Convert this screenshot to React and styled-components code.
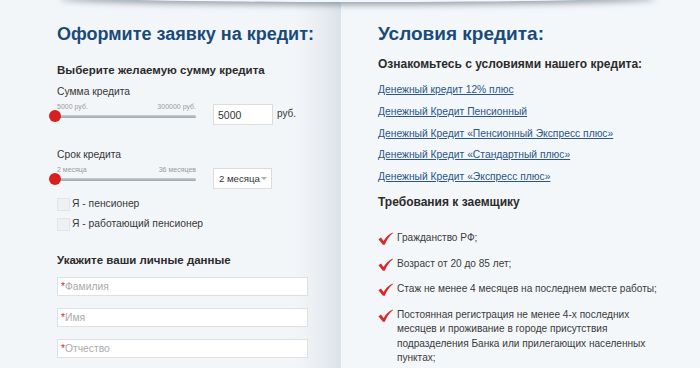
import React from "react";
import styled, { createGlobalStyle } from "styled-components";

const GlobalStyle = createGlobalStyle`
  html, body {
    margin: 0;
    padding: 0;
    background: #f4f7fa;
    font-family: "Liberation Sans", Arial, sans-serif;
  }
`;

const links = [
  "Денежный кредит 12% плюс",
  "Денежный Кредит Пенсионный",
  "Денежный Кредит «Пенсионный Экспресс плюс»",
  "Денежный Кредит «Стандартный плюс»",
  "Денежный Кредит «Экспресс плюс»",
];

const requirements = [
  "Гражданство РФ;",
  "Возраст от 20 до 85 лет;",
  "Стаж не менее 4 месяцев на последнем месте работы;",
  "Постоянная регистрация не менее 4-х последних месяцев и проживание в городе присутствия подразделения Банка или прилегающих населенных пунктах;",
];

const Check = () => (
  <svg width="15" height="13" viewBox="0 0 15 13">
    <path
      d="M0.4 7.2 L3 5.6 L5.6 9 C7.6 5.4 10.2 2.4 14.6 0.4 L14.9 1.3 C11.2 4.2 8.8 8 6.8 12.8 L4.9 12.8 Z"
      fill="#d52b2b"
    />
  </svg>
);

const App = () => {
  return (
    <>
      <GlobalStyle />
      <Page>
        <LeftPanel>
          <Title $size={18}>Оформите заявку на кредит:</Title>
          <SubTitle>Выберите желаемую сумму кредита</SubTitle>
          <Label>Сумма кредита</Label>
          <SliderRow>
            <Slider>
              <Scale>
                <span>5000 руб.</span>
                <span>300000 руб.</span>
              </Scale>
              <Track>
                <Knob />
              </Track>
            </Slider>
            <Field>5000</Field>
            <Unit>руб.</Unit>
          </SliderRow>

          <Label $gap={23}>Срок кредита</Label>
          <SliderRow>
            <Slider $bottom={8}>
              <Scale>
                <span>2 месяца</span>
                <span>36 месяцев</span>
              </Scale>
              <Track>
                <Knob />
              </Track>
            </Slider>
            <Select>
              2 месяца<Caret />
            </Select>
          </SliderRow>

          <CheckList>
            <CheckRow>
              <Box />Я - пенсионер
            </CheckRow>
            <CheckRow>
              <Box />Я - работающий пенсионер
            </CheckRow>
          </CheckList>

          <SubTitle $gap={21}>Укажите ваши личные данные</SubTitle>
          <Inputs>
            {["Фамилия", "Имя", "Отчество"].map((p) => (
              <TextInput key={p}>
                <Star>*</Star>
                {p}
              </TextInput>
            ))}
          </Inputs>
        </LeftPanel>

        <RightPanel>
          <Title $size={19}>Условия кредита:</Title>
          <SubTitle $gap={10} $size={12}>
            Ознакомьтесь с условиями нашего кредита:
          </SubTitle>
          <LinkList>
            {links.map((l) => (
              <Link key={l} href="#">
                {l}
              </Link>
            ))}
          </LinkList>
          <SubTitle $gap={10} $size={12}>
            Требования к заемщику
          </SubTitle>
          <ReqList>
            {requirements.map((r) => (
              <ReqItem key={r}>
                <Check />
                <ReqText>{r}</ReqText>
              </ReqItem>
            ))}
          </ReqList>
        </RightPanel>
      </Page>
    </>
  );
};

const Page = styled.div`
  position: relative;
  display: flex;
  width: 700px;
  height: 368px;
  overflow: hidden;
  background: #f4f7fa;

  &::before {
    content: "";
    position: absolute;
    left: 60px;
    right: 44px;
    top: -10px;
    height: 12px;
    border-radius: 50%;
    box-shadow: 0 3px 6px rgba(85, 105, 120, 0.6);
    background: #f4f7fa;
  }
`;

const LeftPanel = styled.section`
  width: 284px;
  padding: 22px 0 0 57px;
  background: linear-gradient(
    to right,
    #f3f6f9 0%,
    #f3f6f9 86%,
    #e9edf2 94%,
    #dce2e9 100%
  );
  font-size: 10.3px;
  color: #363636;
`;

const RightPanel = styled.section`
  flex: 1;
  padding: 22px 0 0 37px;
  background: #f4f7fa;
`;

const Title = styled.h1`
  margin: 0;
  font-size: ${(p) => p.$size}px;
  line-height: 24px;
  font-weight: bold;
  color: #1a4a7a;
`;

const SubTitle = styled.h2`
  margin: ${(p) => p.$gap ?? 16}px 0 0;
  font-size: ${(p) => p.$size ?? 11.5}px;
  line-height: 16px;
  font-weight: bold;
  color: #2b2b2b;
`;

const Label = styled.div`
  margin-top: ${(p) => p.$gap ?? 7}px;
  line-height: 14px;
`;

const SliderRow = styled.div`
  display: flex;
  align-items: flex-end;
  margin-top: 3px;
`;

const Slider = styled.div`
  width: 139px;
  margin-right: 17px;
  padding-bottom: ${(p) => p.$bottom ?? 7}px;
`;

const Scale = styled.div`
  display: flex;
  justify-content: space-between;
  font-size: 7px;
  line-height: 9px;
  color: #9a9a9a;
`;

const Track = styled.div`
  position: relative;
  height: 3px;
  margin-top: 4px;
  background: linear-gradient(#c9ced3, #9ea5ac);
  border-radius: 2px;
`;

const Knob = styled.span`
  position: absolute;
  left: -8px;
  top: -5px;
  width: 12px;
  height: 12px;
  border-radius: 50%;
  background: #d71f1f;
`;

const Field = styled.div`
  box-sizing: border-box;
  width: 60px;
  height: 21px;
  padding: 0 4px;
  display: flex;
  align-items: center;
  border: 1px solid #dcdcdc;
  background: #fff;
  font-size: 10.5px;
  color: #333;
`;

const Unit = styled.span`
  margin: 0 0 6px 4px;
  font-size: 10px;
`;

const Select = styled(Field)`
  width: 59px;
  padding: 0 5px;
  font-size: 9.6px;
  white-space: nowrap;
`;

const Caret = styled.span`
  margin-left: 1px;
  border-left: 3px solid transparent;
  border-right: 3px solid transparent;
  border-top: 3px solid #aaa;
`;

const CheckList = styled.div`
  display: flex;
  flex-direction: column;
  gap: 6px;
  margin-top: 8px;
`;

const CheckRow = styled.label`
  display: flex;
  align-items: center;
  line-height: 14px;
`;

const Box = styled.span`
  box-sizing: border-box;
  width: 13px;
  height: 13px;
  margin-right: 2px;
  background: #eef0f2;
  border: 1px solid #e2e4e6;
`;

const Inputs = styled.div`
  display: flex;
  flex-direction: column;
  gap: 12px;
  margin-top: 9px;
`;

const TextInput = styled.div`
  box-sizing: border-box;
  width: 251px;
  height: 19px;
  padding: 0 3px;
  display: flex;
  align-items: center;
  border: 1px solid #e0e0e0;
  background: #fff;
  color: #aaa;
`;

const Star = styled.span`
  color: #d42a2a;
`;

const LinkList = styled.div`
  display: flex;
  flex-direction: column;
  gap: 7.75px;
  margin-top: 11px;
`;

const Link = styled.a`
  font-size: 10.3px;
  line-height: 14px;
  color: #2a5688;
  text-decoration: underline;
`;

const ReqList = styled.ul`
  list-style: none;
  margin: 21px 0 0;
  padding: 0;
  display: flex;
  flex-direction: column;
  gap: 11px;
`;

const ReqItem = styled.li`
  display: flex;
  align-items: flex-start;
  gap: 4px;
  font-size: 10.1px;
  line-height: 14.5px;
  color: #3a3a3a;

  svg {
    flex: none;
    margin-top: 1px;
  }
`;

const ReqText = styled.span`
  width: 266px;
`;

export default App;
